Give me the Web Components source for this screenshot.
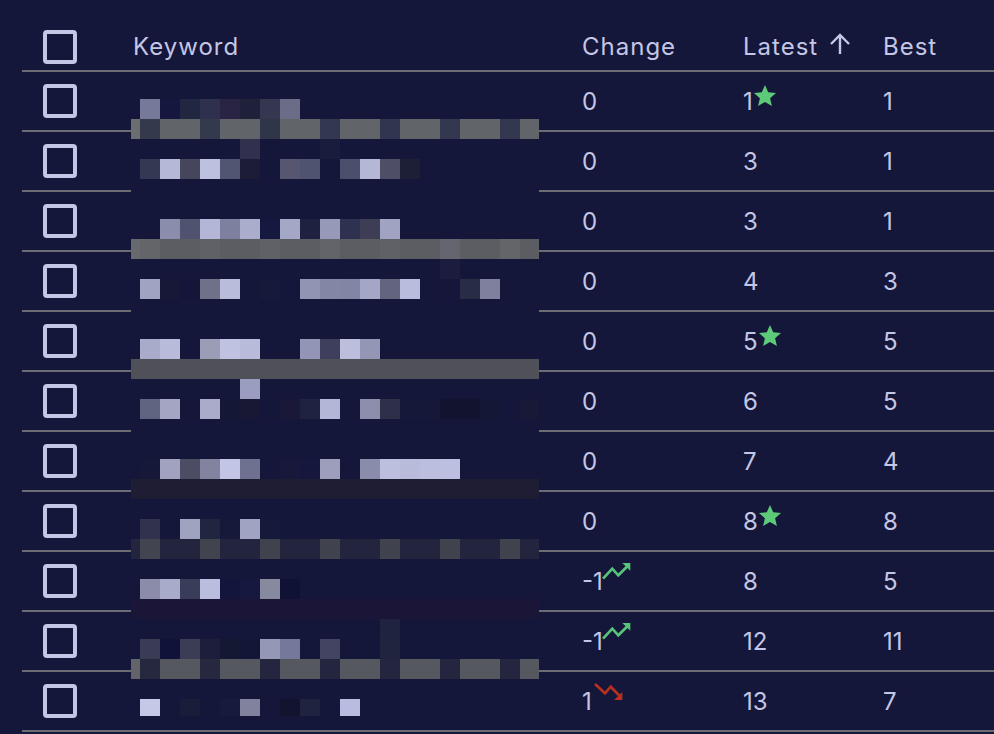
<!DOCTYPE html>
<html>
<head>
<meta charset="utf-8">
<title>Keywords</title>
<style>
  html, body { margin: 0; height: 100%; background: #14163a; overflow: hidden; }
  body { font-family: Inter, "Liberation Sans", sans-serif; color: #c3c6e4; }
</style>
</head>
<body>
<rank-table>
  <rank-row head change="Change" latest="Latest" best="Best" keyword="Keyword"></rank-row>
  <rank-row change="0" latest="1" best="1" latest-mark="star"></rank-row>
  <rank-row change="0" latest="3" best="1"></rank-row>
  <rank-row change="0" latest="3" best="1"></rank-row>
  <rank-row change="0" latest="4" best="3"></rank-row>
  <rank-row change="0" latest="5" best="5" latest-mark="star"></rank-row>
  <rank-row change="0" latest="6" best="5"></rank-row>
  <rank-row change="0" latest="7" best="4"></rank-row>
  <rank-row change="0" latest="8" best="8" latest-mark="star"></rank-row>
  <rank-row change="-1" latest="8" best="5" change-mark="up"></rank-row>
  <rank-row change="-1" latest="12" best="11" change-mark="up"></rank-row>
  <rank-row change="1" latest="13" best="7" change-mark="down"></rank-row>
  <pixel-mosaic slot="over"></pixel-mosaic>
</rank-table>

<script>
class RankTable extends HTMLElement {
  constructor() {
    super();
    this.attachShadow({mode: 'open'}).innerHTML = `
      <style>
        :host { display: block; position: relative; padding-left: 22px; }
      </style>
      <slot></slot>
      <slot name="over"></slot>`;
  }
}

class CheckBox extends HTMLElement {
  constructor() {
    super();
    this.attachShadow({mode: 'open'}).innerHTML = `
      <style>
        :host {
          display: block; width: 34px; height: 34px; box-sizing: border-box;
          border: 4px solid #c3c6e4; border-radius: 4px;
        }
      </style>`;
  }
}

class RankMark extends HTMLElement {
  constructor() {
    super();
    this.attachShadow({mode: 'open'});
  }
  connectedCallback() {
    const kind = this.getAttribute('kind');
    const shapes = {
      star: `<svg width="24" height="24" viewBox="0 0 24 24"><path fill="#5dca79" d="M12 1l3.2 7.2 7.8.8-5.9 5.2 1.8 7.8-6.9-4-6.900 4 1.800-7.800L1 9l7.800-.8z"/></svg>`,
      up: `<svg width="30" height="20" viewBox="0 0 30 20"><path fill="none" stroke="#57c47a" stroke-width="2.700" d="M2 16.700l9.300-10 6 6.600L28 2.700"/><path fill="#57c47a" d="M21.300 1h8v7.700z"/></svg>`,
      down: `<svg width="30" height="20" viewBox="0 0 30 20"><path fill="none" stroke="#b8301f" stroke-width="2.700" d="M1 2l10 9.300 5.700-6.600L26 14.300"/><path fill="#b8301f" d="M28.300 10v8H20z"/></svg>`
    };
    this.shadowRoot.innerHTML = `
      <style>
        :host { display: block; line-height: 0; }
        :host([kind="star"]) { margin: 0 0 10px 0; }
        :host([kind="up"]) { margin: 0 0 18px -2px; }
        :host([kind="down"]) { margin: 0 0 18px 2px; }
      </style>
      ${shapes[kind]}`;
  }
}

class RankRow extends HTMLElement {
  constructor() {
    super();
    this.attachShadow({mode: 'open'});
  }
  connectedCallback() {
    const head = this.hasAttribute('head');
    const mark = name => this.getAttribute(name) ? `<rank-mark kind="${this.getAttribute(name)}"></rank-mark>` : '';
    const sortArrow = `<svg class="sort" width="22" height="22" viewBox="0 0 22 22"><path fill="none" stroke="#c3c6e4" stroke-width="2.400" d="M11 21V2M2 11l9-9 9 9"/></svg>`;
    this.shadowRoot.innerHTML = `
      <style>
        :host {
          display: grid; grid-template-columns: 111px 449px 161px 140px 1fr;
          height: 60px; box-sizing: border-box; border-bottom: 2px solid #6c6c72;
          font-size: 24px;
        }
        :host([head]) { height: 72px; letter-spacing: 1px; }
        .cell { display: flex; align-items: center; white-space: nowrap; }
        check-box { margin-left: 21px; }
        :host([head]) .cell { padding-top: 22px; }
        :host([head]) check-box { margin-top: 2px; }
        .sort { margin: 0 0 4px 11px; }
      </style>
      <div class="cell"><check-box></check-box></div>
      <div class="cell">${this.getAttribute('keyword') || ''}</div>
      <div class="cell"><span>${this.getAttribute('change')}</span>${mark('change-mark')}</div>
      <div class="cell"><span>${this.getAttribute('latest')}</span>${mark('latest-mark')}${head ? sortArrow : ''}</div>
      <div class="cell"><span>${this.getAttribute('best')}</span></div>`;
  }
}

// one line per 20px band of the blurred keyword column, top to bottom: [band colour, {cell: colour}]
const MOSAIC = [
  [null, {}],
  [null, {1:'#77799a',2:'#15173f',3:'#222741',4:'#2f2f4e',5:'#2a2444',6:'#1f2039',7:'#353650',8:'#6b6c88'}],
  ['#616569', {0:'#6a6e70',1:'#34394c',4:'#343a4e',7:'#30364a',10:'#333750',13:'#313650',16:'#343750',19:'#343750'}],
  [null, {6:'#31304f',10:'#1a1c3e'}],
  [null, {1:'#343852',2:'#b5b9d8',3:'#45465c',4:'#bdc0de',5:'#515571',6:'#1c1c36',8:'#565670',9:'#50536f',11:'#4b4f6c',12:'#b4b7d6',13:'#4e4e66',14:'#1d1f36'}],
  [null, {}],
  [null, {}],
  [null, {2:'#8a8dab',3:'#50536f',4:'#b3b6d6',5:'#7d809e',6:'#aaadcb',7:'#15183f',8:'#a5a7c6',9:'#1f2140',10:'#9699b8',11:'#2e3150',12:'#3d3e56',13:'#a0a3c2'}],
  ['#5b5d63', {0:'#68696e',1:'#636569',4:'#5f6166',7:'#5f6166',10:'#626469',13:'#5f6166',16:'#64656e',19:'#636569'}],
  [null, {16:'#1c1c3e'}],
  [null, {1:'#a0a3c2',2:'#171838',3:'#141538',4:'#6f7189',5:'#b9bcdb',7:'#17193a',9:'#9194b3',10:'#8486a6',11:'#8385a5',12:'#a3a6c6',13:'#63657f',14:'#b9bcdc',16:'#15163a',17:'#292c45',18:'#7e809d'}],
  [null, {}],
  [null, {}],
  [null, {1:'#a8abc9',2:'#b8bbd9',4:'#9a9db5',5:'#c0c2e2',6:'#b8bbd9',9:'#9295b5',10:'#3e3e5d',11:'#bcbfdb',12:'#9496b6'}],
  ['#4f5058', {}],
  [null, {6:'#9a9dbf'}],
  [null, {1:'#616480',2:'#a3a5c3',4:'#a9abc8',5:'#151737',6:'#181835',7:'#15173a',8:'#191937',9:'#1f2240',10:'#b3b6d6',12:'#8c8eac',13:'#2d3048',14:'#16183a',15:'#16183a',16:'#12142f',17:'#12142f',18:'#151736',19:'#15173a',20:'#171936'}],
  ['#15173a', {}],
  [null, {}],
  [null, {1:'#16183a',2:'#a0a2c0',3:'#4c4d65',4:'#81839f',5:'#c3c5e6',6:'#6f7190',8:'#17183a',9:'#15173d',10:'#9c9ebc',12:'#8a8cab',13:'#bdbfdf',14:'#b9bbdb',15:'#bcbedf',16:'#bdbfe0'}],
  ['#1e1d33', {}],
  [null, {}],
  [null, {1:'#31324d',3:'#a0a3bf',4:'#212540',5:'#17193a',6:'#a0a4c2',7:'#17193a'}],
  ['#22253d', {1:'#42454f',4:'#41444e',7:'#40434d',10:'#40434d',13:'#40434d',16:'#40434d',19:'#40434d'}],
  [null, {}],
  [null, {1:'#8a8ca9',2:'#a8abc9',3:'#3a3d5a',4:'#babddd',5:'#13153c',6:'#16183f',7:'#878a9f',8:'#101235'}],
  ['#1b1638', {}],
  [null, {13:'#20233f'}],
  [null, {1:'#3a3c55',2:'#10123a',3:'#3b3d57',4:'#1c1e3c',5:'#141833',6:'#141638',7:'#9497b5',8:'#75789a',10:'#424462',13:'#21243f'}],
  ['#56585f', {1:'#25283f',4:'#26283f',7:'#24263f',10:'#24263f',13:'#24263f',16:'#24263f',19:'#24263f',0:'#62646a'}],
  [null, {}],
  [null, {1:'#c6c8e8',2:'#14163a',3:'#191d3a',5:'#161a3c',6:'#80829e',7:'#14163a',8:'#12132e',9:'#20233f',10:'#15173a',11:'#b9bce0'}]
];

class PixelMosaic extends HTMLElement {
  constructor() {
    super();
    this.attachShadow({mode: 'open'});
  }
  connectedCallback() {
    let cells = '';
    for (const [band, picks] of MOSAIC) {
      for (let c = 0; c <= 20; c++) {
        cells += `<i style="background:${picks[c] || band || '#14163a'}"></i>`;
      }
    }
    this.shadowRoot.innerHTML = `
      <style>
        :host {
          position: absolute; left: 131px; top: 79px; width: 408px; height: 637px;
          display: grid; grid-template-columns: 9px repeat(19, 20px) 19px; grid-auto-rows: 20px;
          overflow: hidden;
        }
      </style>
      ${cells}`;
  }
}

customElements.define('rank-table', RankTable);
customElements.define('check-box', CheckBox);
customElements.define('rank-mark', RankMark);
customElements.define('rank-row', RankRow);
customElements.define('pixel-mosaic', PixelMosaic);
</script>
</body>
</html>
